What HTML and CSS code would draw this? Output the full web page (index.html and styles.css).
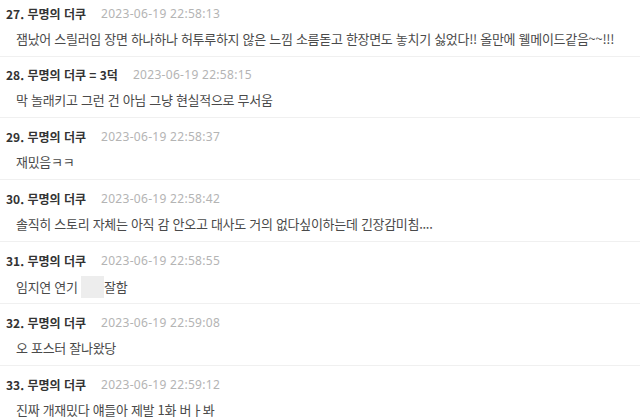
FILE: index.html
```html
<!DOCTYPE html>
<html lang="ko">
<head>
    <meta charset="UTF-8">
    <meta name="viewport" content="width=device-width, initial-scale=1.0">
    <title>댓글</title>
    <link rel="stylesheet" href="styles.css">
</head>
<body>
    <div class="comment-list">
        <div class="comment">
            <div class="comment-head">
                <span class="comment-name">27. 무명의 더쿠</span>
                <span class="comment-date">2023-06-19 22:58:13</span>
            </div>
            <div class="comment-body">잼났어 스릴러임 장면 하나하나 허투루하지 않은 느낌 소름돋고 한장면도 놓치기 싫었다!! 올만에 웰메이드같음~~!!!</div>
        </div>

        <div class="comment">
            <div class="comment-head">
                <span class="comment-name">28. 무명의 더쿠 = 3덕</span>
                <span class="comment-date">2023-06-19 22:58:15</span>
            </div>
            <div class="comment-body">막 놀래키고 그런 건 아님 그냥 현실적으로 무서움</div>
        </div>

        <div class="comment">
            <div class="comment-head">
                <span class="comment-name">29. 무명의 더쿠</span>
                <span class="comment-date">2023-06-19 22:58:37</span>
            </div>
            <div class="comment-body">재밌음ㅋㅋ</div>
        </div>

        <div class="comment">
            <div class="comment-head">
                <span class="comment-name">30. 무명의 더쿠</span>
                <span class="comment-date">2023-06-19 22:58:42</span>
            </div>
            <div class="comment-body">솔직히 스토리 자체는 아직 감 안오고 대사도 거의 없다싶이하는데 긴장감미침....</div>
        </div>

        <div class="comment">
            <div class="comment-head">
                <span class="comment-name">31. 무명의 더쿠</span>
                <span class="comment-date">2023-06-19 22:58:55</span>
            </div>
            <div class="comment-body">임지연 연기 <span class="blurred"></span>잘함</div>
        </div>

        <div class="comment">
            <div class="comment-head">
                <span class="comment-name">32. 무명의 더쿠</span>
                <span class="comment-date">2023-06-19 22:59:08</span>
            </div>
            <div class="comment-body">오 포스터 잘나왔당</div>
        </div>

        <div class="comment">
            <div class="comment-head">
                <span class="comment-name">33. 무명의 더쿠</span>
                <span class="comment-date">2023-06-19 22:59:12</span>
            </div>
            <div class="comment-body">진짜 개재밌다 얘들아 제발 1화 버ㅏ봐</div>
        </div>
    </div>
</body>
</html>
```

FILE: styles.css
```css
body {
    margin: 0;
    background: #fff;
    font-family: "Noto Sans CJK KR", "Noto Sans", sans-serif;
    overflow: hidden;
}

.comment {
    padding: 8px 6px 7px;
    border-bottom: 1px solid #f0f0f0;
}

.comment:first-child {
    padding-top: 4px;
}

.comment:nth-child(n+3) {
    margin-top: 1px;
}

.comment-head {
    display: flex;
    align-items: center;
    gap: 15px;
    height: 18px;
}

.comment-name {
    font-size: 12px;
    font-weight: bold;
    color: #333;
}

.comment-date {
    font-family: "Noto Sans", sans-serif;
    font-size: 12px;
    letter-spacing: 0.3px;
    color: #b4b4b4;
}

.comment-body {
    margin-top: 7px;
    padding-left: 10px;
    height: 20px;
    line-height: 20px;
    font-size: 13px;
    letter-spacing: -0.3px;
    color: #4a4a4a;
    white-space: nowrap;
}

.blurred {
    display: inline-block;
    width: 23px;
    height: 22px;
    background: #ededed;
    vertical-align: -6px;
}
```
